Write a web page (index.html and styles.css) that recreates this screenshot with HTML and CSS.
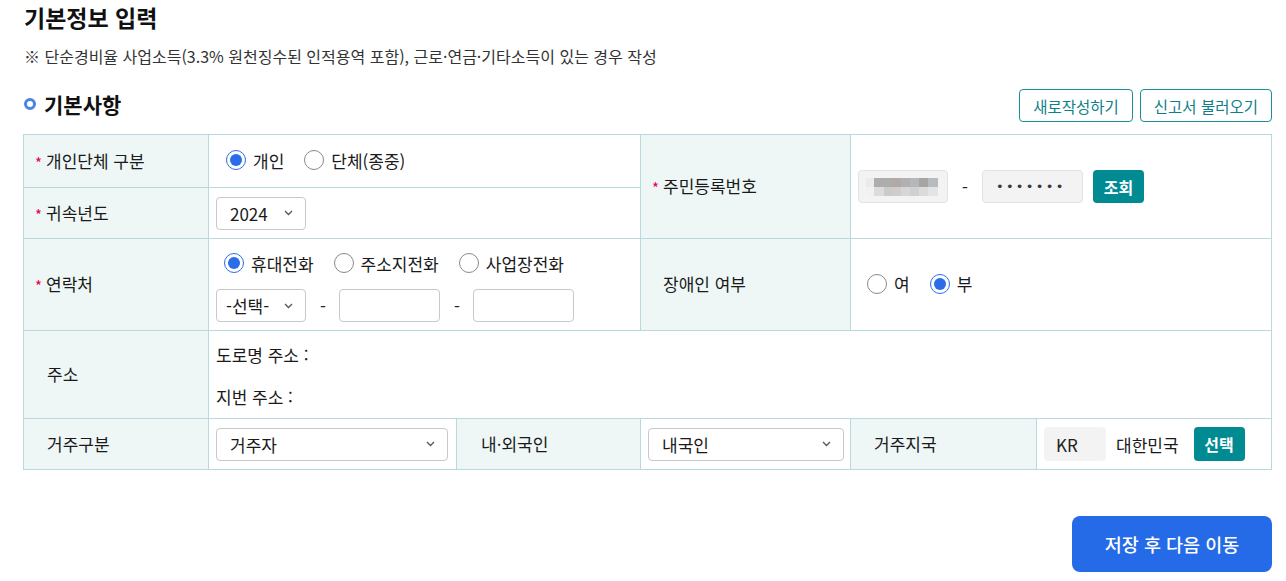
FILE: index.html
```html
<!DOCTYPE html>
<html lang="ko">
<head>
<meta charset="utf-8">
<title>기본정보 입력</title>
<link rel="stylesheet" href="styles.css">
</head>
<body>
<div class="page">
  <h1 class="title">기본정보 입력</h1>
  <p class="note">※ 단순경비율 사업소득(3.3% 원천징수된 인적용역 포함), 근로·연금·기타소득이 있는 경우 작성</p>

  <div class="section-head">
    <h2 class="section-title"><span class="ring"></span>기본사항</h2>
    <div class="head-actions">
      <button class="btn-outline">새로작성하기</button>
      <button class="btn-outline">신고서 불러오기</button>
    </div>
  </div>

  <div class="form-grid">
    <div class="th req-label a-r1c1"><span class="req">*</span>개인단체 구분</div>
    <div class="td a-r1c23">
      <div class="radios radios-r1">
        <label class="radio-item"><span class="radio checked"></span>개인</label>
        <label class="radio-item"><span class="radio"></span>단체(종중)</label>
      </div>
    </div>
    <div class="th req-label a-r12c4"><span class="req">*</span>주민등록번호</div>
    <div class="td a-r12c56">
      <div class="field-row">
        <div class="inp inp-rrn1">
          <svg width="72" height="18" viewBox="0 0 72 18" aria-hidden="true">
            <rect x="0" y="0" width="8" height="9" fill="#ebebeb"/>
            <rect x="8" y="0" width="10" height="9" fill="#adadad"/>
            <rect x="18" y="0" width="8" height="9" fill="#aeadad"/>
            <rect x="26" y="0" width="9" height="9" fill="#b2a8a6"/>
            <rect x="35" y="0" width="9" height="9" fill="#b1b1b3"/>
            <rect x="44" y="0" width="9" height="9" fill="#b5b7b9"/>
            <rect x="53" y="0" width="9" height="9" fill="#a8a6a5"/>
            <rect x="62" y="0" width="10" height="9" fill="#b8bbbe"/>
            <rect x="0" y="9" width="8" height="9" fill="#f1f1f1"/>
            <rect x="8" y="9" width="10" height="9" fill="#dcdcdc"/>
            <rect x="18" y="9" width="8" height="9" fill="#cbcbcb"/>
            <rect x="26" y="9" width="9" height="9" fill="#cfcdcc"/>
            <rect x="35" y="9" width="9" height="9" fill="#d6d6d6"/>
            <rect x="44" y="9" width="9" height="9" fill="#d0d0d0"/>
            <rect x="53" y="9" width="9" height="9" fill="#dcdbd9"/>
            <rect x="62" y="9" width="10" height="9" fill="#e2e4e8"/>
          </svg>
        </div>
        <span class="dash">-</span>
        <div class="inp inp-rrn2"><span class="pw">•••••••</span></div>
        <button class="btn-teal">조회</button>
      </div>
    </div>

    <div class="th req-label a-r2c1"><span class="req">*</span>귀속년도</div>
    <div class="td a-r2c23">
      <div class="sel sel-year"><span>2024</span>
        <svg class="chev" width="9" height="6" viewBox="0 0 9 6"><path d="M1 1l3.5 3.5L8 1" fill="none" stroke="#555" stroke-width="1.3"/></svg>
      </div>
    </div>

    <div class="th req-label a-r3c1"><span class="req">*</span>연락처</div>
    <div class="td td-stack a-r3c23">
      <div class="radios radios-r3">
        <label class="radio-item"><span class="radio checked"></span>휴대전화</label>
        <label class="radio-item"><span class="radio"></span>주소지전화</label>
        <label class="radio-item"><span class="radio"></span>사업장전화</label>
      </div>
      <div class="field-row">
        <div class="sel sel-phone"><span>-선택-</span>
          <svg class="chev" width="9" height="6" viewBox="0 0 9 6"><path d="M1 1l3.5 3.5L8 1" fill="none" stroke="#555" stroke-width="1.3"/></svg>
        </div>
        <span class="dash dash-phone">-</span>
        <div class="inp inp-phone"></div>
        <span class="dash dash-phone">-</span>
        <div class="inp inp-phone"></div>
      </div>
    </div>
    <div class="th a-r3c4 th-wide">장애인 여부</div>
    <div class="td a-r3c56">
      <div class="radios radios-dis">
        <label class="radio-item"><span class="radio"></span>여</label>
        <label class="radio-item"><span class="radio checked"></span>부</label>
      </div>
    </div>

    <div class="th a-r4c1">주소</div>
    <div class="td td-addr a-r4c26">
      <p class="addr-line">도로명 주소 :</p>
      <p class="addr-line">지번 주소 :</p>
    </div>

    <div class="th a-r5c1">거주구분</div>
    <div class="td a-r5c2">
      <div class="sel sel-wide"><span>거주자</span>
        <svg class="chev" width="9" height="6" viewBox="0 0 9 6"><path d="M1 1l3.5 3.5L8 1" fill="none" stroke="#555" stroke-width="1.3"/></svg>
      </div>
    </div>
    <div class="th a-r5c3 th-nat">내·외국인</div>
    <div class="td a-r5c4">
      <div class="sel sel-nat"><span>내국인</span>
        <svg class="chev" width="9" height="6" viewBox="0 0 9 6"><path d="M1 1l3.5 3.5L8 1" fill="none" stroke="#555" stroke-width="1.3"/></svg>
      </div>
    </div>
    <div class="th a-r5c5">거주지국</div>
    <div class="td a-r5c6">
      <div class="inp inp-kr">KR</div>
      <span class="country">대한민국</span>
      <button class="btn-teal btn-select">선택</button>
    </div>
  </div>

  <div class="footer">
    <button class="btn-primary">저장 후 다음 이동</button>
  </div>
</div>
</body>
</html>
```

FILE: styles.css
```css
* { box-sizing: border-box; }

body {
  margin: 0;
  background: #fff;
  color: #222;
  font-family: "Noto Sans CJK KR", "Noto Sans", "DejaVu Sans", sans-serif;
}

.page {
  width: 1249px;
  margin-left: 23px;
}

.title {
  margin: 0;
  padding-left: 1px;
  font-size: 23px;
  line-height: 34px;
  font-weight: 700;
  color: #111;
}

.note {
  margin: 12px 0 0;
  padding-left: 1px;
  font-size: 16px;
  line-height: 20px;
  color: #333;
}

.section-head {
  margin-top: 23px;
  height: 33px;
  display: flex;
  align-items: center;
  justify-content: space-between;
}

.section-title {
  margin: 0 0 3px;
  display: flex;
  align-items: center;
  gap: 8px;
  font-size: 21px;
  font-weight: 700;
  color: #111;
}

.ring {
  width: 12px;
  height: 12px;
  margin-left: 1px;
  border: 3px solid #4a84e4;
  border-radius: 50%;
}

.head-actions {
  display: flex;
  gap: 7px;
}

.btn-outline {
  height: 33px;
  padding: 0 13px;
  border: 1px solid #1a8e98;
  border-radius: 4px;
  background: #fff;
  color: #0d7f89;
  font-family: inherit;
  font-size: 15.5px;
}

/* grid form */
.form-grid {
  margin-top: 12px;
  display: grid;
  grid-template-columns: 184px 247px 183px 209px 185px 234px;
  grid-template-rows: 52px 50px 91px 87px 50px;
  gap: 1px;
  padding: 1px;
  background: #b8d9dd;
}

.th {
  background: #eef7f6;
  display: flex;
  align-items: center;
  padding-left: 23px;
  padding-bottom: 2px;
  font-size: 17px;
  color: #1a1a1a;
}

.th.req-label { padding-left: 11px; }
.th.th-wide { padding-left: 22px; }
.th.th-nat { padding-left: 24px; }

.req {
  color: #e4004f;
  font-size: 15px;
  margin-right: 4px;
  transform: translateY(2px);
}

.td {
  background: #fff;
  display: flex;
  align-items: center;
  padding-left: 7px;
  font-size: 17px;
}

.a-r1c1 { grid-column: 1; grid-row: 1; }
.a-r1c23 { grid-column: 2 / 4; grid-row: 1; }
.a-r12c4 { grid-column: 4; grid-row: 1 / 3; }
.a-r12c56 { grid-column: 5 / 7; grid-row: 1 / 3; }
.a-r2c1 { grid-column: 1; grid-row: 2; }
.a-r2c23 { grid-column: 2 / 4; grid-row: 2; }
.a-r3c1 { grid-column: 1; grid-row: 3; }
.a-r3c23 { grid-column: 2 / 4; grid-row: 3; }
.a-r3c4 { grid-column: 4; grid-row: 3; }
.a-r3c56 { grid-column: 5 / 7; grid-row: 3; }
.a-r4c1 { grid-column: 1; grid-row: 4; }
.a-r4c26 { grid-column: 2 / 7; grid-row: 4; }
.a-r5c1 { grid-column: 1; grid-row: 5; }
.a-r5c2 { grid-column: 2; grid-row: 5; }
.a-r5c3 { grid-column: 3; grid-row: 5; }
.a-r5c4 { grid-column: 4; grid-row: 5; }
.a-r5c5 { grid-column: 5; grid-row: 5; }
.a-r5c6 { grid-column: 6; grid-row: 5; }

/* radios */
.radios {
  display: flex;
  align-items: center;
  gap: 20px;
  font-size: 17px;
}
.radios-r1 { margin-left: 10px; margin-bottom: 2px; }
.radios-r3 { margin-left: 8px; height: 24px; }
.radios-dis { margin-left: 9px; margin-bottom: 2px; }

.radio-item {
  display: flex;
  align-items: center;
  gap: 7px;
  color: #1a1a1a;
}

.radio {
  width: 20px;
  height: 20px;
  border: 1px solid #8a8a8a;
  border-radius: 50%;
  background: #fff;
  display: flex;
  align-items: center;
  justify-content: center;
}
.radio.checked {
  border: 1.5px solid #2a6de6;
}
.radio.checked::after {
  content: "";
  width: 12px;
  height: 12px;
  border-radius: 50%;
  background: #2a6de6;
}

/* inputs */
.field-row {
  display: flex;
  align-items: center;
}

.inp {
  height: 33px;
  border: 1px solid #c9c9c9;
  border-radius: 4px;
  background: #fff;
  display: flex;
  align-items: center;
}

.inp-rrn1 {
  width: 90px;
  background: #f3f3f3;
  border-color: #e2e2e2;
  padding-left: 7px;
}
.inp-rrn2 {
  width: 101px;
  background: #f3f3f3;
  border-color: #e2e2e2;
  padding-left: 13px;
}
.pw {
  font-family: "DejaVu Sans", sans-serif;
  font-size: 13px;
  letter-spacing: 2.3px;
  color: #3a3a3a;
}

.dash {
  margin: 0 14px 0 14px;
  font-size: 17px;
  color: #222;
}
.dash-phone { margin: 0 13px 0 14px; }

.btn-teal {
  margin-left: 10px;
  height: 33px;
  width: 51px;
  border: 0;
  border-radius: 4px;
  background: #008b93;
  color: #fff;
  font-family: inherit;
  font-size: 16px;
  font-weight: 700;
}

.sel {
  height: 33px;
  border: 1px solid #c9c9c9;
  border-radius: 4px;
  background: #fff;
  display: flex;
  align-items: center;
  justify-content: space-between;
  padding: 0 12px 0 13px;
  font-size: 17px;
  color: #1a1a1a;
}
.sel-year { width: 90px; }
.sel-phone { width: 90px; padding-left: 9px; }
.sel-wide { width: 232px; }
.sel-nat { width: 196px; }
.chev { flex: none; }

.td-stack {
  flex-direction: column;
  align-items: flex-start;
  justify-content: flex-start;
  padding-top: 12px;
  gap: 14px;
}

.inp-phone { width: 101px; }

.td-addr {
  flex-direction: column;
  align-items: flex-start;
  justify-content: flex-start;
  padding-top: 12px;
  gap: 18px;
}
.addr-line {
  margin: 0;
  font-size: 17px;
  line-height: 24px;
  color: #1a1a1a;
}

.inp-kr {
  width: 62px;
  height: 34px;
  background: #f3f3f3;
  border-color: #f3f3f3;
  padding-left: 11px;
  font-size: 17px;
  color: #222;
}
.country {
  margin-left: 10px;
  font-size: 17px;
  color: #1a1a1a;
}
.btn-select {
  margin-left: 15px;
  height: 34px;
}

.footer {
  margin-top: 46px;
  display: flex;
  justify-content: flex-end;
}

.btn-primary {
  width: 200px;
  height: 56px;
  border: 0;
  border-radius: 8px;
  background: #256ae6;
  color: #fff;
  font-family: inherit;
  font-size: 18.5px;
  font-weight: 500;
}
```
